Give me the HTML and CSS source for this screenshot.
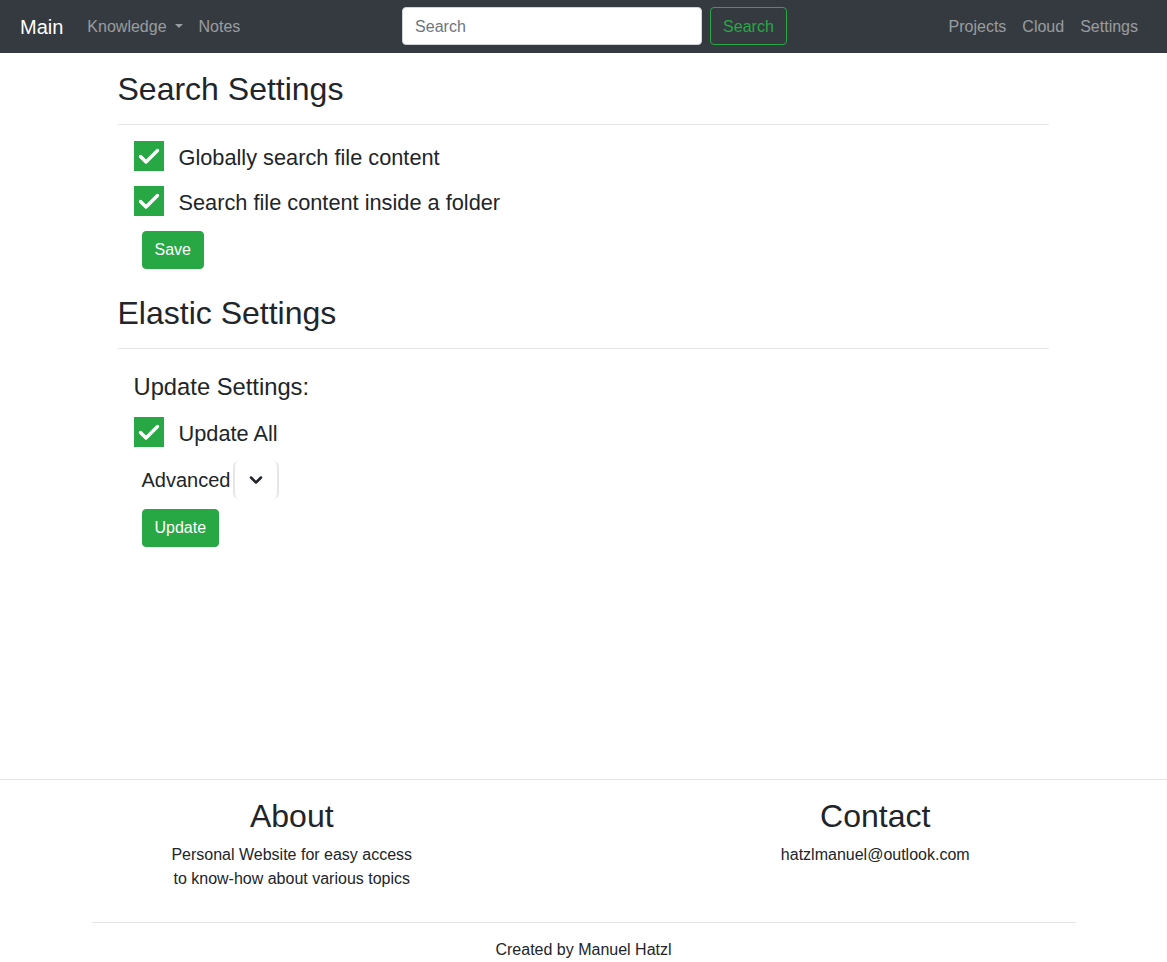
FILE: index.html
```html
<!DOCTYPE html>
<html lang="en">
<head>
<meta charset="utf-8">
<title>Settings</title>
<link rel="stylesheet" href="styles.css">
</head>
<body>
<nav class="navbar">
  <a class="brand" href="#">Main</a>
  <ul class="nav">
    <li><a class="nav-link dropdown" href="#">Knowledge</a></li>
    <li><a class="nav-link" href="#">Notes</a></li>
  </ul>
  <form class="search-form">
    <input class="search-input" type="text" placeholder="Search">
    <button class="btn-outline" type="button">Search</button>
  </form>
  <ul class="nav">
    <li><a class="nav-link" href="#">Projects</a></li>
    <li><a class="nav-link" href="#">Cloud</a></li>
    <li><a class="nav-link" href="#">Settings</a></li>
  </ul>
</nav>

<main class="container">
  <section class="section">
    <h2 class="title">Search Settings</h2>
    <hr class="rule">
    <div class="check-row">
      <span class="checkbox"><svg width="30" height="30" viewBox="0 0 30 30"><polyline points="6.5,15.5 12,21 23.5,9.5" fill="none" stroke="#fff" stroke-width="3.4" stroke-linecap="round" stroke-linejoin="round"/></svg></span>
      <span class="check-label">Globally search file content</span>
    </div>
    <div class="check-row">
      <span class="checkbox"><svg width="30" height="30" viewBox="0 0 30 30"><polyline points="6.5,15.5 12,21 23.5,9.5" fill="none" stroke="#fff" stroke-width="3.4" stroke-linecap="round" stroke-linejoin="round"/></svg></span>
      <span class="check-label">Search file content inside a folder</span>
    </div>
    <button class="btn-success" type="button">Save</button>
  </section>

  <section class="section section-elastic">
    <h2 class="title title-elastic">Elastic Settings</h2>
    <hr class="rule rule-elastic">
    <h4 class="subtitle">Update Settings:</h4>
    <div class="check-row">
      <span class="checkbox"><svg width="30" height="30" viewBox="0 0 30 30"><polyline points="6.5,15.5 12,21 23.5,9.5" fill="none" stroke="#fff" stroke-width="3.4" stroke-linecap="round" stroke-linejoin="round"/></svg></span>
      <span class="check-label">Update All</span>
    </div>
    <div class="advanced-row">
      <span class="advanced-label">Advanced</span>
      <button class="btn-toggle" type="button"><svg width="14" height="10" viewBox="0 0 14 10"><polyline points="2,2.5 7,7.5 12,2.5" fill="none" stroke="#212529" stroke-width="2.5" stroke-linecap="round" stroke-linejoin="round"/></svg></button>
    </div>
    <button class="btn-success" type="button">Update</button>
  </section>
</main>

<footer class="footer">
  <div class="footer-row">
    <div class="footer-col">
      <h2 class="footer-title">About</h2>
      <p class="footer-text">Personal Website for easy access<br>to know-how about various topics</p>
    </div>
    <div class="footer-col">
      <h2 class="footer-title">Contact</h2>
      <p class="footer-text">hatzlmanuel@outlook.com</p>
    </div>
  </div>
  <hr class="footer-rule">
  <p class="credit">Created by Manuel Hatzl</p>
</footer>
</body>
</html>
```

FILE: styles.css
```css
* { box-sizing: border-box; }
html, body { margin: 0; padding: 0; }
body {
  font-family: "Liberation Sans", Arial, Helvetica, sans-serif;
  font-size: 16px;
  line-height: 1.5;
  color: #212529;
  background: #fff;
  min-height: 962px;
  display: flex;
  flex-direction: column;
}

/* Navbar */
.navbar {
  background: #343a40;
  height: 53px;
  padding: 7px 21px 8px 20px;
  display: flex;
  align-items: center;
}
.brand {
  color: #fff;
  font-size: 20px;
  line-height: 30px;
  padding-top: 2px;
  text-decoration: none;
  margin-right: 16px;
}
.nav {
  list-style: none;
  margin: 0;
  padding: 0;
  display: flex;
}
.nav-link {
  display: block;
  padding: 10px 8px 8px;
  color: rgba(255,255,255,.5);
  text-decoration: none;
}
.dropdown::after {
  content: "";
  display: inline-block;
  margin-left: 8px;
  vertical-align: .255em;
  border-top: .3em solid;
  border-right: .3em solid transparent;
  border-left: .3em solid transparent;
}
.search-form {
  margin: 0 auto;
  display: flex;
  align-items: center;
}
.search-input {
  width: 300px;
  height: 38px;
  padding: 7px 12px 5px;
  font: inherit;
  color: #495057;
  background: #fff;
  border: 1px solid #ced4da;
  border-radius: 4px;
  outline: none;
}
.search-input::placeholder { color: #6c757d; }
.btn-outline {
  margin-left: 8px;
  height: 38px;
  padding: 7px 12px 5px;
  font: inherit;
  color: #28a745;
  background: transparent;
  border: 1px solid #28a745;
  border-radius: 4px;
}

/* Main */
.container {
  width: 960px;
  margin: 0 auto;
  padding: 17px 15px 0 14px;
  flex: 1;
}
.title {
  font-size: 32px;
  font-weight: 500;
  line-height: 1.2;
  margin: 0 0 8px;
}
.title-elastic {
  padding-top: 1px;
}
.rule {
  margin: 16px 0;
  border: 0;
  border-top: 1px solid rgba(0,0,0,.1);
}
.rule-elastic {
  margin-top: 15px;
}
.check-row {
  display: flex;
  align-items: center;
  margin: 0 0 15px 16px;
  height: 30px;
}
.checkbox {
  width: 30px;
  height: 30px;
  background: #28a745;
  display: block;
  flex: none;
}
.checkbox svg { display: block; }
.check-label {
  margin-left: 15px;
  font-size: 21.75px;
  line-height: 30px;
  padding-top: 4px;
}
.btn-success {
  display: block;
  margin-left: 24px;
  height: 38px;
  padding: 6px 12px;
  font: inherit;
  color: #fff;
  background: #28a745;
  border: 1px solid #28a745;
  border-radius: 4px;
}
.section-elastic { margin-top: 24px; }
.subtitle {
  font-size: 23.75px;
  font-weight: 500;
  line-height: 1.2;
  margin: 24px 0 16px 16px;
}
.section-elastic .check-row { margin-bottom: 14px; }
.advanced-row {
  display: flex;
  align-items: center;
  margin: 0 0 10px 24px;
  height: 38px;
}
.advanced-label {
  font-size: 20px;
  line-height: 30px;
}
.btn-toggle {
  margin-left: 3px;
  width: 46px;
  height: 38px;
  padding: 0;
  background: transparent;
  border: 0;
  border-left: 2px solid #e4e6e8;
  border-right: 2px solid #e4e6e8;
  border-radius: 6px;
  display: flex;
  align-items: center;
  justify-content: center;
}
.btn-toggle svg { display: block; }

/* Footer */
.footer {
  border-top: 1px solid #e4e4e4;
  padding-top: 17px;
}
.footer-row {
  display: flex;
}
.footer-col {
  flex: 1;
  text-align: center;
  padding: 0 15px 15px;
}
.footer-title {
  font-size: 32px;
  font-weight: 500;
  line-height: 1.2;
  margin: 0 0 8px;
}
.footer-text {
  margin: 0 0 16px;
}
.footer-rule {
  width: 984px;
  margin: 0 auto 15px;
  border: 0;
  border-top: 1px solid #e4e4e4;
}
.credit {
  margin: 0;
  text-align: center;
}
```
